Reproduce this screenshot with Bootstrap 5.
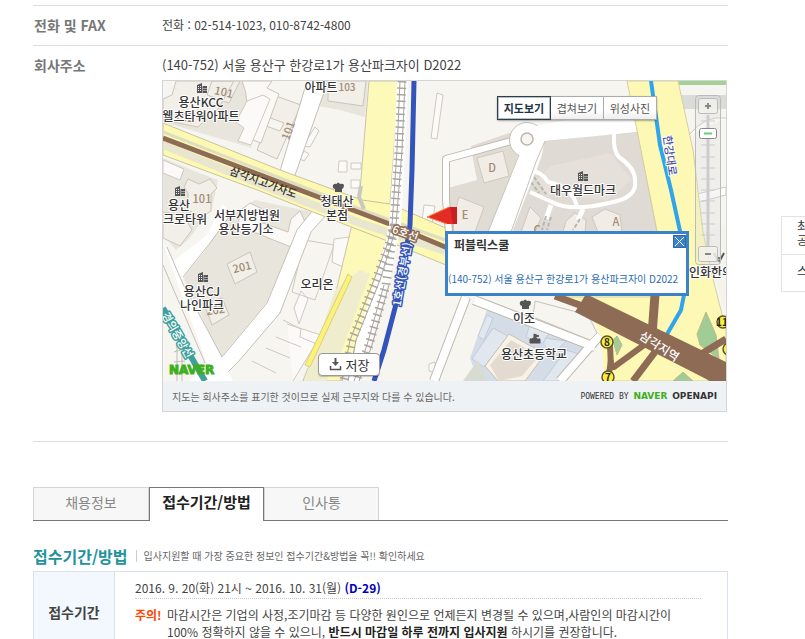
<!DOCTYPE html>
<html lang="ko">
<head>
<meta charset="utf-8">
<meta name="viewport" content="width=device-width, initial-scale=1">
<title>접수기간/방법</title>
<link rel="stylesheet" href="https://cdn.jsdelivr.net/npm/bootstrap@5.3.0/dist/css/bootstrap.min.css">
<style>
body{font-family:"Noto Sans CJK KR","Liberation Sans",sans-serif;font-size:12px;line-height:18px;color:#444;background:#fff}
.page-main{margin-left:33px;padding-top:5px;min-width:0}
.side-box{width:24px;margin:216px 0 0 53px;border:1px solid #e3e3e3;border-right:0;font-size:12px;line-height:14px;color:#333}
.side-box a{color:#333;padding:2px 0 7px 15px;height:37px;white-space:nowrap;overflow:hidden}
.side-box a+a{border-top:1px solid #e3e3e3;padding-top:9px}
.info-table{border-bottom:1px solid #ddd}
.info-table th,.info-table td{border-top:1px solid #ddd;padding:9px 0 10px;line-height:20px;vertical-align:top}
.info-table th{width:129px;padding-left:1px;font-size:14px;color:#777}
.info-table tr:last-child td{padding-bottom:29px}
.addr{font-size:13px}
.map-box{margin:5px 1px 0 0;border:1px solid #d5d5d5;background:#eef2f4;line-height:normal}
.map-box svg{display:block}
.map-view{height:300px}
.map-note{height:30px;padding:0 9px;font-size:10px;color:#666}
.powered{font:8px "DejaVu Sans Mono",monospace;color:#333}
.powered b{font:bold 9px "DejaVu Sans",sans-serif}
.powered .brand{color:#3fae1c}
.map-types{top:15px;right:69px;box-shadow:0 1px 2px #0005;border-radius:2px}
.map-types .btn{font-size:11px;line-height:22px;height:24px;width:54px;padding:0;border:1px solid #aaa;border-radius:0;color:#555;background:linear-gradient(#fff 60%,#eee)}
.map-types .btn.active{border:1px solid #2c3e50;color:#1f3347;font-weight:700;background:#fff;box-shadow:inset 0 0 0 1px #2c3e5055}
.zoomer{top:14px;right:5px;width:26px;height:170px}
.info-pop{left:282px;top:150px;width:244px;height:65px;border:3px solid #3c82c6;background:#fff}
.info-pop strong{left:6px;top:2px;font-size:12px;line-height:18px;color:#333}
.info-pop p{font-size:10px;line-height:16px;color:#2a6cb0;margin-top:37px}
.info-pop button{width:13px;height:13px;top:1px;right:0;background:#3c82c6}
.save-btn{left:155px;top:272px;width:62px;height:23px;border:1px solid #999;border-radius:4px;background:#fff;font-size:13px;color:#333;box-shadow:0 1px 1px #0003}
.page-tabs{margin-top:45px;border-bottom:1px solid #777}
.page-tabs .nav-link{width:115px;height:34px;padding:0;line-height:28px;font-size:14px;text-align:center;color:#888;background:#f7f7f7;border:1px solid #d5d5d5;border-bottom:0;border-radius:0;margin:0}
.page-tabs li:first-child .nav-link{width:116px}
.page-tabs .nav-link.active{color:#222;font-size:15px;font-weight:700;background:#fff;border-color:#777;margin-bottom:-1px}
.page-tabs li:not(.is-on) .nav-link{height:33px}
.sec-head{margin-top:20px;height:30px}
.sec-head h2{font-size:16px;line-height:24px;font-weight:700;color:#23939b}
.sec-head p{font-size:10px;color:#666;border-left:1px solid #ccc;margin-left:8px;padding-left:7px;line-height:12px}
.term-table{border:1px solid #d7e3ec}
.term-table th{width:81px;background:#f2f8fd;border-right:1px solid #d7e3ec;font-size:14px;text-align:center;vertical-align:middle}
.term-table td{padding:6px 26px 12px 20px}
.term-date{line-height:20px;border-bottom:1px dotted #ccc}
.term-date b{color:#0000c0}
.term-note{margin-top:7px;line-height:17px}
.term-note .warn{color:#f40;width:32px}
.term-note b{color:#222}
</style>
<script src="https://cdn.jsdelivr.net/npm/bootstrap@5.3.0/dist/js/bootstrap.bundle.min.js"></script>
</head>
<body class="d-flex align-items-start vh-100 overflow-hidden">
<main class="page-main flex-grow-1">
<table class="info-table w-100">
<tr><th scope="row">전화 및 FAX</th><td>전화 : 02-514-1023, 010-8742-4800</td></tr>
<tr><th scope="row">회사주소</th><td><span class="addr">(140-752) 서울 용산구 한강로1가 용산파크자이 D2022</span>
<div class="map-box">
<div class="map-view position-relative overflow-hidden">
<svg width="100%" height="300" viewBox="163 81 563 300" preserveAspectRatio="xMinYMin slice" role="img" aria-label="지도" font-family="Noto Sans CJK KR,sans-serif">
<defs>
<g id="bldg" fill="#555"><path d="M0 2L5 0V10H0ZM5.500 3H10V10H5.500Z"/><path d="M1 3h1v1H1zM3 3h1v1H3zM1 5h1v1H1zM3 5h1v1H3zM1 7h1v1H1zM3 7h1v1H3zM6.500 5h1v1h-1zM8.500 5h1v1h-1zM6.500 7h1v1h-1zM8.500 7h1v1h-1z" fill="#eee"/></g>
<path id="chef" d="M2 10V7Q-1 6 0 3Q2 1 3.500 2Q5-1 7 2Q10 1 11 3Q11 6 9 7V10Z" fill="#555"/>
</defs>
<path fill="#f6f5f0" d="M163 81H726V381H163Z"/>
<!-- city blocks -->
<g fill="#e8e5dc">
<path d="M182 81H262L238 118 252 148 163 122V104L180 97ZM315 81H368L365 117 340 110 318 106Z"/>
<path d="M163 158L197 172 218 180 212 208 188 240 176 250 163 235ZM210 243L230 216 255 200 312 212 297 232 266 303 221 357 183 277Z"/>
</g>
<g fill="#f2eee8" stroke="#cbc5ba">
<path d="M176 81L172 95 163 99V120L198 127 218 109 234 81ZM212 81L207 95 229 103 240 81ZM276 96L301 105 277 159 257 150 266 126 280 131 284 123 268 117Z"/>
<path d="M328 81H366L363 106 328 101Z"/>
<path d="M188 179L199 184 210 179 217 188 211 194V211L201 217 188 210V193L184 187ZM163 212L184 216 192 230 180 246 163 238ZM227 264L250 252 257 272 235 284ZM204 304L222 298 229 315 212 325Z"/>
<path d="M242 81Q252 102 242 136L261 143 279 94 267 88 272 81ZM241 210L250 203 262 209 260 222 288 232 291 219 300 211 306 224 291 247 256 233 237 229Z" fill="#faf9f6"/>
</g>
<g fill="#fbfaf8" stroke="#cfcac1">
<path d="M247 101L263 95 270 99 251 145 238 141 244 128 236 122ZM315 127L319 131 310 147 303 146ZM163 160L184 169 180 180 163 173ZM339 161h8v11h-9zM304 151l5 3-5 7-4-2zM437 93l6 2-6 44-6-1zM424 205l11 1-4 24-10-1zM351 163h10v6h-10zM351 180h9v8h-9zM334 239L350 237 343 267 332 262ZM294 308L301 291 308 299 299 324ZM287 324L321 335 293 381M276 337L301 347M266 348L290 358M252 361L276 373M429 364l6-2 1 11-7-2z"/>
<path d="M283 320L301 329 300 337 319 345 303 381M304 240L334 245 315 300 292 292Z" fill="none"/>
</g>
<!-- white streets -->
<g fill="#fff" stroke="#c4bfb7">
<path d="M307 81L280 171 294 178 328 81ZM313 210L297 230 267 303 222 357 207 370 219 381 238 362 280 313 311 232 327 214Z"/>
<path d="M163 243L207 364 190 381H233L222 357 183 284 170 253ZM182 279L204 252 231 211 222 205 207 235 171 263Z" stroke="none"/>
<path d="M163 265L205 363M167 247L183 284 222 357M183 277L210 243 232 213" fill="none"/>
</g>
<!-- vertical avenue -->
<path d="M369 81H399L390 204 392 235 380 300 340 381H303L334 300 360 191Z" fill="#fdf9b8" stroke="#c9c4ae"/>
<path d="M360 270L370 274 342 350 326 381H304L335 290Z" fill="#f0edcf"/>
<path d="M348 274L352 277 310 367 305 365Z" fill="#fbf277" stroke="#d8cf84"/>
<!-- overpass -->
<path d="M163 123L280 170 362 200 390 204 446 228V265L390 242 313 212 260 191 163 155Z" fill="#fdf9b0" stroke="#c9c3a0"/>
<path d="M163 145L270 188 360 223 445 251" fill="none" stroke="#e9e6cf" stroke-width="8"/>
<path d="M163 132L270 174 360 209 445 240" fill="none" stroke="#deddc4" stroke-width="3"/>
<path d="M163 138L350 209 395 226 450 249" fill="none" stroke="#8e6b55" stroke-width="5"/>
<path d="M361 186L359 197 364 209" fill="none" stroke="#c9c7c1" stroke-width="4"/>
<!-- rails -->
<g fill="none">
<path d="M402 81L399 150 394 225 390 245 379 285 362 340 354 381M403 81L400 150 396 225 387 270 370 325 359 360 350 381" stroke="#fff" stroke-width="10"/>
<path d="M402 81L399 150 394 225 389 245 376 280 352 340 344 381M394 225L386 285 369 345 356 381" stroke="#aaa69f" stroke-width="9" stroke-dasharray="1.500 5"/>
<path d="M400 81L397 150 392 225 387 245 374 280 350 340 342 381M405 81L402 150 396 225 391 245 380 280 356 340 348 381M389 285L372 345 359 381M384 285L367 345 354 381" stroke="#aaa69f"/>
<path d="M414 81L412 170 410 225 407 245 403 275 395 308 384 350 374 381" stroke="#3355bb" stroke-width="5"/>
<path d="M163 308L205 381" stroke="#3da09b" stroke-width="6"/>
<path d="M174 352L184 349M174 362L185 361M177 345V381M182 345V381" stroke="#bbb"/>
</g>
<!-- apartment estate -->
<path d="M471 146L518 130 519 153 490 232H449L450 187 476 179Z" fill="#e0dcd4"/>
<path d="M545 141L586 136 638 132 657 232H496L540 155Z" fill="#dfdad3" stroke="#c8c2ba"/>
<path d="M448 160L472 155 477 180 448 188Z" fill="#f6f5f0"/>
<path d="M551 166L610 153 632 180 607 200 548 195 536 180Z" fill="#e5e0da"/>
<g fill="#f1ece6" stroke="#d0c8bd"><path d="M477 158L503 151 509 176 484 183ZM459 197L484 207 475 232H450ZM592 217L605 209 620 215 622 232H598ZM566 221L575 213 586 220 585 232H563ZM530 207L541 218 535 232H521Z"/></g>
<g fill="none" stroke-linejoin="round">
<path d="M515 140L446 159 446 200 449 232" stroke="#bfb9b1" stroke-width="8"/>
<path d="M515 140L446 159 446 200 449 232" stroke="#fff" stroke-width="6"/>
<path d="M614 134Q613 151 619 157 635 168 635 180 638 198 609 203 570 212 552 202L530 192M530 170Q542 172 548 182 573 187 577 207" stroke="#fff" stroke-width="4"/>
<path d="M551 205L546 219M583 209L578 220" stroke="#fff" stroke-width="5"/>
<path d="M546 216L542 230M551 217L547 230M580 219L573 230M534 177L546 194M531 182L539 193" stroke="#bbb5ad" stroke-width="2" stroke-dasharray="4 2"/>
</g>
<circle cx="527" cy="140" r="17.500" fill="#fff" stroke="#c4beb5"/>
<path d="M520 152L488 232H512L541 158 545 141 638 132 632 98 590 116 540 125 525 130Z" fill="#fff"/>
<path d="M519 155L488 232M545 141L536 162 511 232" fill="none" stroke="#c8c2ba"/>
<circle cx="527" cy="139" r="6" fill="#f6f5f0" stroke="#bcb5ac" stroke-width="1.500"/>
<!-- east side -->
<path d="M680 95H726V109H682Z" fill="#d9dcd8"/><path d="M678 81H726V85H679Z" fill="#a4d194"/>
<path d="M693 195L726 187V195L695 203M689 135Q705 115 726 118M726 238H716L720 231" fill="#fff" stroke="#ccc7be"/>
<path d="M627 81H678L693 150 703 232 712 275 726 330V381H600L590 320 560 297 657 297 657 231 640 145Z" fill="#fdf9b4" stroke="#d5cf9f"/>
<path d="M704 231L726 225V315L712 268Z" fill="#f4f3ec"/>
<path d="M651 81L660 145 671 190 682 240 687 280 681 310 666 336" fill="none" stroke="#30a4ec" stroke-width="4"/>
<!-- school -->
<path d="M445 296H565L592 318 600 333 605 381H445Z" fill="#f6f5f0"/>
<path d="M488 307L555 329 590 345 563 381H478L470 358Z" fill="#d4dde7"/>
<path d="M487 315l6 3-9 22-6-4zM493 328L508 336 484 367 472 359ZM545 338L566 341 548 359M566 350L579 354 558 381H543ZM532 318L550 332 542 344 526 337Z" fill="#e0e7ef" stroke="#c1ccd8"/>
<path d="M509 334L545 354 525 381H498L485 366Z" fill="#f7f1e6" stroke="#c8c1b4"/><path d="M511 340L539 356 522 376 499 381 490 365Z" fill="#e4dbd0"/>
<path d="M474 300L595 347M600 335L560 381M466 297L434 381" fill="none" stroke="#bfb9b0" stroke-width="10"/>
<path d="M474 300L595 347M600 335L560 381M466 297L434 381" fill="none" stroke="#fff" stroke-width="8"/>
<path d="M535 301L588 315 597 333 590 340 533 317Z" fill="#f6f5f0" stroke="#c8c2ba"/>
<path d="M463 381L478 360 487 381Z" fill="#d8dbd2"/>
<!-- station -->
<path d="M706 312L716 335 719 359 700 345 697 334ZM617 336L622 345 617 355 613 340ZM673 381L683 372 693 381ZM708 381L716 367 726 371V381Z" fill="#a0cc96" stroke="#c1b88e"/>
<g fill="none" stroke="#8e6b55">
<path d="M655 295L652 335" stroke-width="9"/><path d="M644 345L614 367H611L610 345" stroke-width="6"/><path d="M611 360L608 381" stroke-width="6"/>
<path d="M655 352L633 381M693 359L726 339" stroke-width="7"/><path d="M555 296L585 307" stroke-width="7"/>
</g>
<path d="M586 294L726 362V381H710L575 312Z" fill="#8e6b55"/>
<g fill="#ffee38" stroke="#5d552d" stroke-width="1.500"><circle cx="607" cy="342" r="6"/><circle cx="608" cy="377" r="6"/><circle cx="723" cy="322" r="6"/><circle cx="729" cy="349" r="6"/></g>
<g font-size="10" font-weight="700" text-anchor="middle" fill="#222"><text x="607" y="346">8</text><text x="608" y="381">7</text><text x="722" y="326">11</text></g>
<!-- marker -->
<path d="M453 224V232" stroke="#caa08c"/><path d="M427 217L449 207H457V224H447Z" fill="#e32c24"/><path d="M450 207H457V224H453Z" fill="#c91f22"/><path d="M427 217L449 207M427 217L447 224" stroke="#f58a3c"/>
<!-- labels -->
<g font-size="11" font-weight="500" fill="#a08c74" text-anchor="middle"><text transform="translate(223 96)rotate(12)">101</text><text transform="translate(292 132)rotate(-70)">101</text><text x="347" y="91" font-size="10">103</text><text x="202" y="203">101</text><text transform="translate(243 271)rotate(-14)">201</text><text transform="translate(216 314)rotate(-8)">202</text><text x="184" y="122">102</text><text x="492" y="172">D</text><text x="465" y="219">E</text><text x="616" y="226">A</text><text x="537" y="234">C</text></g>
<use href="#bldg" x="197" y="83"/><use href="#bldg" x="175" y="186"/><use href="#bldg" x="198" y="272"/><use href="#bldg" x="578" y="171"/><use href="#chef" x="333" y="182"/><use href="#chef" x="520" y="299"/>
<path d="M530 343h10v-4h-3l-1-1h-3l-1 1h-2zM534 339V334L539 336 534 338" fill="#555" stroke="#555"/><path d="M714 253l4 8M724 253l-5 9M716 258h6" stroke="#555" stroke-width="2"/>
<g font-size="12" font-weight="500" fill="#333" stroke="#fff" stroke-width="2" stroke-linejoin="round" paint-order="stroke" text-anchor="middle">
<text x="201" y="107">용산KCC</text><text x="201" y="121">웰츠타워아파트</text><text x="321" y="92">아파트</text>
<text x="179" y="210">용산</text><text x="185" y="224">크로타워</text><text x="247" y="220">서부지방법원</text><text x="246" y="234">용산등기소</text>
<text x="337" y="206">청태산</text><text x="337" y="220">본점</text><text x="317" y="289">오리온</text>
<text x="202" y="296">용산CJ</text><text x="202" y="310">나인파크</text><text x="583" y="195">대우월드마크</text>
<text x="524" y="323">이조</text><text x="534" y="359">용산초등학교</text><text x="711" y="277">인화한의</text>
<text transform="translate(262 186)rotate(20)" font-size="11" stroke="none">삼각지고가차도</text>
<text transform="translate(666 156)rotate(82)" font-size="11" fill="#4a4f9c">한강대로</text>
</g>
<g font-size="11" font-weight="500" fill="#fff" stroke-width="3" stroke-linejoin="round" paint-order="stroke" text-anchor="middle">
<text transform="translate(404 237)rotate(20)" stroke="#8e6b55">6호선</text>
<text transform="translate(406 275)rotate(-80)" stroke="#3355bb">1호선(경부선)</text>
<text transform="translate(174 337)rotate(60)" stroke="#3da09b">경의중앙선</text>
<text transform="translate(657 350)rotate(33)" font-size="12" stroke="none">삼각지역</text>
</g>
<text x="169" y="374" font-family="DejaVu Sans,sans-serif" font-size="12" font-weight="700" fill="#3fae1c" stroke="#3fae1c">NAVER</text>
</svg>
<div class="map-types btn-group position-absolute" role="group" aria-label="지도 종류"><button type="button" class="btn active">지도보기</button><button type="button" class="btn">겹쳐보기</button><button type="button" class="btn">위성사진</button></div>
<svg class="zoomer position-absolute" viewBox="0 0 26 170" aria-hidden="true">
<rect x=".5" y=".5" width="25" height="169" rx="3" fill="#ddd" fill-opacity=".3" stroke="#bbb"/>
<path d="M13 20V152" stroke="#ccc" stroke-width="3"/><path d="M6 26H11M15 26H20M6 50H20M6 62H20M6 73H20M6 84H20M6 95H20M6 106H20M6 118H20M6 129H20M6 140H20" stroke="#ccc"/>
<g fill="#f1f1ec" fill-opacity=".8" stroke="#bbb"><rect x="3.500" y="3.500" width="19" height="15" rx="2"/><rect x="3.500" y="151.500" width="19" height="15" rx="2"/><rect x="4.500" y="33.500" width="17" height="10" rx="2" fill="#fff" fill-opacity="1" stroke="#888"/></g>
<path d="M10 11H16M13 8V14M10 159H16" stroke="#888" stroke-width="2"/><path d="M9 38.500H17" stroke="#67ce73" stroke-width="2"/>
</svg>
<div class="info-pop position-absolute"><strong class="position-absolute">퍼블릭스쿨</strong><button type="button" class="position-absolute border-0 p-0 d-flex" aria-label="닫기"><svg width="13" height="13" viewBox="0 0 13 13"><path d="M2 2L11 11M11 2L2 11" stroke="#fff"/><path d="M.5.500H12.500V12.500H.500Z" fill="none" stroke="#2a6cb0"/></svg></button><p class="mb-0 text-nowrap">(140-752) 서울 용산구 한강로1가 용산파크자이 D2022</p></div>
<button type="button" class="save-btn position-absolute d-flex align-items-center justify-content-center gap-1 p-0"><svg width="13" height="13" viewBox="0 0 13 13"><path d="M6.500 0V6" stroke="#555" stroke-width="2"/><path d="M3 4H10L6.500 8Z" fill="#555"/><path d="M1.500 8V11.500H11.500V8" fill="none" stroke="#555" stroke-width="1.500"/></svg>저장</button>
</div>
<div class="map-note d-flex align-items-center justify-content-between"><span>지도는 회사주소를 표기한 것이므로 실제 근무지와 다를 수 있습니다.</span><span class="powered">POWERED BY <b class="brand">NAVER</b> <b>OPENAPI</b></span></div>
</div></td></tr>
</table>
<ul class="nav nav-tabs page-tabs">
<li class="nav-item"><a class="nav-link" href="#info">채용정보</a></li>
<li class="nav-item is-on"><a class="nav-link active" aria-current="page" href="#term">접수기간/방법</a></li>
<li class="nav-item"><a class="nav-link" href="#talk">인사통</a></li>
</ul>
<div class="sec-head d-flex align-items-center" id="term"><h2 class="mb-0">접수기간/방법</h2><p class="mb-0">입사지원할 때 가장 중요한 정보인 접수기간&amp;방법을 꼭!! 확인하세요</p></div>
<table class="term-table w-100">
<tr><th scope="row">접수기간</th><td><div class="term-date">2016. 9. 20(화) 21시 ~ 2016. 10. 31(월) <b>(D-29)</b></div>
<div class="term-note d-flex"><b class="warn flex-shrink-0">주의!</b><div class="text-nowrap">마감시간은 기업의 사정,조기마감 등 다양한 원인으로 언제든지 변경될 수 있으며,사람인의 마감시간이<br>100% 정확하지 않을 수 있으니, <b>반드시 마감일 하루 전까지 입사지원</b> 하시기를 권장합니다.</div></div></td></tr>
</table>
</main>
<aside class="side-box flex-shrink-0 overflow-hidden"><a href="#recent" class="d-block text-decoration-none">최<br>공</a><a href="#scrap" class="d-block text-decoration-none">스</a></aside>
</body>
</html>
